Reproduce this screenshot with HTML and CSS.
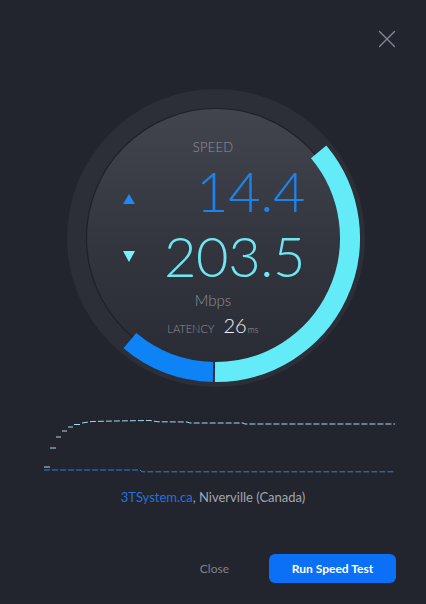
FILE: index.html
```html
<!DOCTYPE html>
<html lang="en">
<head>
<meta charset="utf-8">
<title>Speed Test</title>
<link rel="stylesheet" href="styles.css">
</head>
<body>
<div class="dialog">
  <header class="dialog-head">
    <button class="icon-close" aria-label="Close">
      <svg width="18" height="18" viewBox="0 0 18 18"><path d="M1.5 1.5 L16.5 16.5 M16.5 1.5 L1.5 16.5" stroke="#858894" stroke-width="1.4" fill="none" stroke-linecap="round"/></svg>
    </button>
  </header>

  <section class="gauge">
    <svg class="gauge-art" width="298" height="298" viewBox="0 0 298 298">
      <defs>
        <linearGradient id="face" x1="0" y1="0" x2="0" y2="1">
          <stop offset="0" stop-color="#43454e"/>
          <stop offset="0.55" stop-color="#33353e"/>
          <stop offset="1" stop-color="#2a2c35"/>
        </linearGradient>
      </defs>
      <circle cx="149" cy="149" r="149" fill="#2c2e38"/>
      <circle cx="149" cy="149" r="129.5" fill="url(#face)" stroke="#1f2128" stroke-width="1.2"/>
      <path d="M251.65 62.87 A134 134 0 0 1 148 283" stroke="#63ecf8" stroke-width="20" fill="none"/>
      <path d="M146 283 A134 134 0 0 1 62.87 251.65" stroke="#0d83f6" stroke-width="20" fill="none"/>
    </svg>
    <div class="readout">
      <div class="speed-label">SPEED</div>
      <div class="num-row up">
        <span class="tri tri-up"></span>
        <span class="num num-up">14.4</span>
      </div>
      <div class="num-row down">
        <span class="tri tri-down"></span>
        <span class="num num-down">203.5</span>
      </div>
      <div class="unit">Mbps</div>
      <div class="latency">
        <span class="lat-label">LATENCY</span>
        <span class="lat-val">26</span>
        <span class="lat-unit">ms</span>
      </div>
    </div>
  </section>

  <svg class="chart" width="360" height="70" viewBox="40 410 360 70">
    <path class="line-dl" d="M44 467 h6 M50 448 h6 M56 437 h5 M62 431 h5 M68 427 h5 M74 424.5 h6"/>
    <polyline class="line-dl dash" points="82,423 92,421.5 115,421 150,420.5 158,421.8 187,422 190,423 243,423 245,424 395,424"/>
    <polyline class="line-ul dash" points="44,470 140,470 142,471.8 395,471.8"/>
  </svg>

  <p class="server"><a class="server-link">3TSystem.ca</a>, Niverville (Canada)</p>

  <footer class="actions">
    <button class="btn-text">Close</button>
    <button class="btn-primary">Run Speed Test</button>
  </footer>
</div>
</body>
</html>
```

FILE: styles.css
```css
html, body {
  margin: 0;
  padding: 0;
  background: #22242e;
}
body {
  font-family: "Lato", "Open Sans", "DejaVu Sans", sans-serif;
  color: #a3a6ae;
}
.dialog {
  width: 426px;
  height: 604px;
  display: flex;
  flex-direction: column;
  overflow: hidden;
}
.dialog-head {
  display: flex;
  justify-content: flex-end;
  padding: 30px 30px 0 0;
  height: 18px;
}
.icon-close {
  border: 0;
  background: none;
  padding: 0;
  width: 18px;
  height: 18px;
  display: block;
}
.icon-close svg { display: block; }

.gauge {
  margin: 41px 0 0 67px;
  width: 298px;
  height: 298px;
  display: grid;
}
.gauge-art, .readout {
  grid-area: 1 / 1;
}
.gauge-art { display: block; }
.readout {
  display: flex;
  flex-direction: column;
  align-items: center;
  padding: 52px 6px 0 0;
}
.speed-label {
  font-size: 13px;
  line-height: 13px;
  font-weight: 300;
  color: #8f929b;
  letter-spacing: 0.2px;
}
.num-row {
  align-self: flex-start;
  margin-left: 56px;
  width: 182px;
  display: flex;
  justify-content: space-between;
  align-items: flex-start;
}
.num-row.up { margin-top: 8.5px; }
.num-row.down { margin-top: 9px; }
.num {
  font-size: 56px;
  line-height: 56px;
  font-weight: 300;
  letter-spacing: -0.4px;
}
.num-up { color: #1e82ea; }
.num-down { color: #70e6f0; }
.tri {
  width: 0;
  height: 0;
  border-left: 6px solid transparent;
  border-right: 6px solid transparent;
}
.tri-up {
  border-bottom: 10px solid #1f88f2;
  margin-top: 31px;
}
.tri-down {
  border-top: 11px solid #7eeef8;
  margin-top: 23px;
}
.unit {
  margin-top: 9px;
  font-size: 15px;
  line-height: 15px;
  font-weight: 300;
  color: #8d9099;
}
.latency {
  margin-top: 7px;
  display: flex;
  align-items: baseline;
}
.lat-label {
  font-size: 11px;
  font-weight: 300;
  color: #8d9099;
  margin-right: 9px;
}
.lat-val {
  font-size: 20px;
  line-height: 20px;
  font-weight: 300;
  color: #f2f3f5;
}
.lat-unit {
  font-size: 9px;
  font-weight: 300;
  color: #a2a5ad;
  margin-left: 1px;
}

.chart {
  display: block;
  margin: 23px 0 0 40px;
}
.line-dl {
  fill: none;
  stroke: #a6dbe6;
  stroke-width: 1;
}
.line-ul {
  fill: none;
  stroke: #2f80d6;
  stroke-width: 1;
}
.dash { stroke-dasharray: 6 2; }

.server {
  margin: 9px 0 0;
  text-align: center;
  font-size: 13px;
  line-height: 16px;
  color: #a3a6ae;
}
.server-link {
  color: #2872d8;
  text-decoration: none;
}

.actions {
  margin-top: 49px;
  display: flex;
  justify-content: flex-end;
  align-items: center;
  gap: 40px;
  padding-right: 30px;
}
.btn-text {
  border: 0;
  background: none;
  padding: 0;
  font-family: inherit;
  font-size: 12px;
  color: #7f828b;
}
.btn-primary {
  border: 0;
  width: 127px;
  height: 29px;
  border-radius: 6px;
  background: #0b70f6;
  color: #fff;
  font-family: inherit;
  font-size: 12px;
  font-weight: 700;
  padding: 0;
}
```
